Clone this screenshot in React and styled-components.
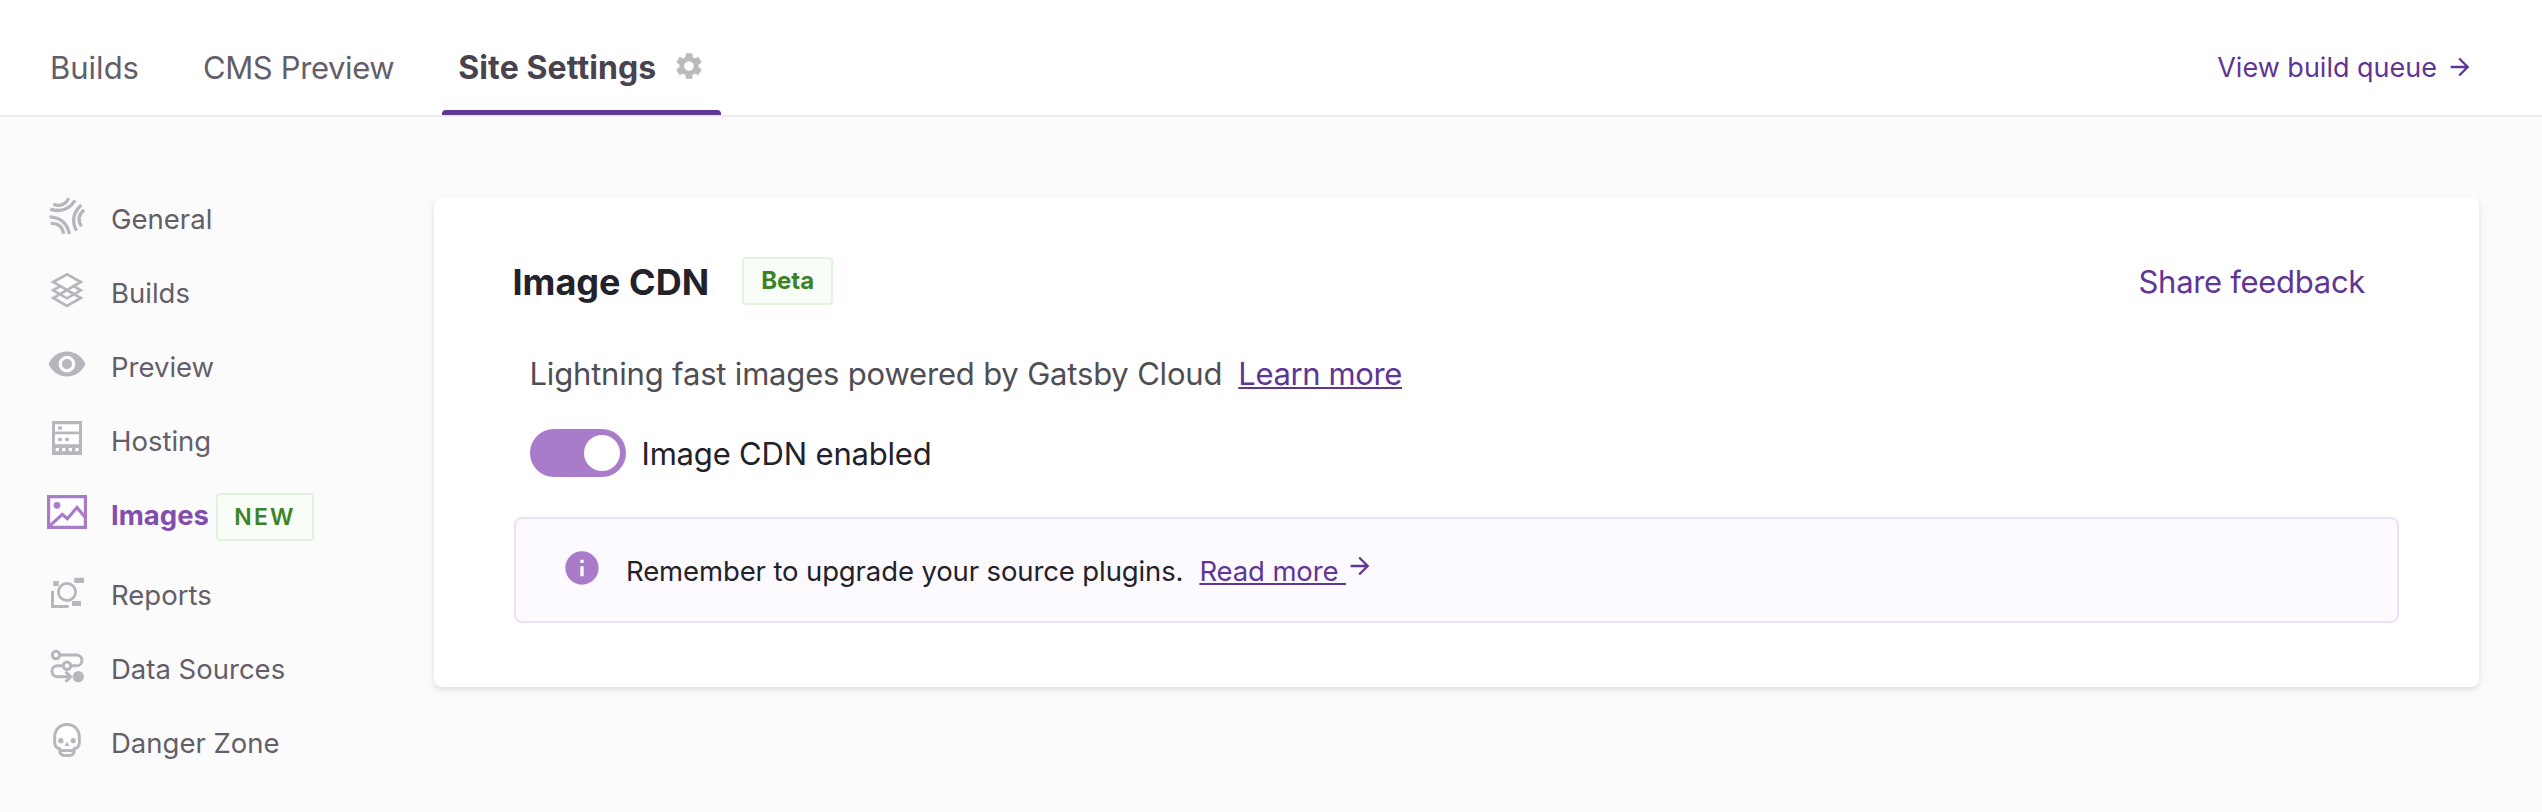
import React from "react";
import styled, { createGlobalStyle, css } from "styled-components";
import { MdArrowForward, MdInfo, MdSettings, MdVisibility } from "react-icons/md";

const color = {
  purple: "#5f3595",
  purpleMid: "#834dab",
  purpleSoft: "#a87cc8",
  ink: "#232129",
  grey: "#635e69",
  icon: "#b7b5bd",
};

const GlobalStyle = createGlobalStyle`
  *, *::before, *::after { box-sizing: border-box; }
  body {
    margin: 0;
    background: #fbfbfb;
    color: ${color.ink};
    font-family: Inter, "Liberation Sans", sans-serif;
    -webkit-font-smoothing: antialiased;
  }
`;

const Page = styled.div`
  min-height: 100vh;
`;

const Header = styled.header`
  display: flex;
  justify-content: space-between;
  height: 117px;
  padding: 0 68px 0 34px;
  background: #fff;
  border-bottom: 2px solid #ebebeb;
`;

const Tabs = styled.nav`
  display: flex;
  gap: 32px;
`;

const Tab = styled.a`
  display: flex;
  align-items: center;
  position: relative;
  padding: 20px 16px 0;
  font-size: 31px;
  line-height: 40px;
  letter-spacing: ${(p) => p.$tracking || 0}px;
  color: ${color.grey};
  white-space: nowrap;

  ${(p) =>
    p.$active &&
    css`
      width: 279px;
      justify-content: space-between;
      font-size: 32px;
      font-weight: 700;
      color: #48434f;

      &::after {
        content: "";
        position: absolute;
        left: 0;
        right: 0;
        bottom: 0;
        height: 5px;
        border-radius: 4px 4px 0 0;
        background: ${color.purple};
      }
    `}
`;

const GearIcon = styled(MdSettings)`
  flex: none;
  width: 32px;
  height: 32px;
  margin-bottom: 4px;
  color: #bbbbbd;
`;

const QueueLink = styled.a`
  display: flex;
  align-items: center;
  gap: 9px;
  padding-top: 19px;
  font-size: 27px;
  color: ${color.purple};
`;

const Arrow = styled(MdArrowForward)`
  width: 28px;
  height: 28px;
  flex: none;
`;

const Body = styled.div`
  display: grid;
  grid-template-columns: 434px 1fr;
  align-items: start;
  padding-right: 63px;
`;

const Sidebar = styled.nav`
  padding: 65px 0 0 47px;
`;

const NavItem = styled.a`
  display: flex;
  align-items: flex-start;
  height: ${(p) => (p.$active ? 80 : 74)}px;
  font-size: 27.5px;
  line-height: 74px;
  font-weight: ${(p) => (p.$active ? 700 : 400)};
  color: ${(p) => (p.$active ? color.purpleMid : color.grey)};

  svg {
    flex: none;
    width: 40px;
    height: 40px;
    margin: 14px 24px 0 0;
    color: ${(p) => (p.$active ? color.purpleSoft : color.icon)};
  }
`;

const Badge = styled.span`
  display: inline-flex;
  align-items: center;
  justify-content: center;
  height: 48px;
  padding: 0 17px;
  border: 2px solid #e0f4de;
  border-radius: 4px;
  background: #f8fdf8;
  color: #3b8326;
  font-size: 24px;
  font-weight: 700;
  line-height: 44px;
`;

const NewBadge = styled(Badge)`
  width: 98px;
  margin: 15px 0 0 7px;
  padding: 0;
  font-size: 23px;
  font-weight: 600;
  letter-spacing: 2.2px;
`;

const Card = styled.main`
  height: 490px;
  margin-top: 80px;
  padding: 60px 80px 0;
  border-radius: 8px;
  background: #fff;
  box-shadow: 0 2px 4px rgba(46, 41, 51, 0.08), 0 4px 8px rgba(71, 63, 79, 0.08);
`;

const CardHeader = styled.div`
  display: flex;
  align-items: center;
  height: 48px;
`;

const Title = styled.h1`
  margin: 1px 33px 0 -1.5px;
  font-size: 36px;
  font-weight: 700;
  line-height: 48px;
`;

const FeedbackLink = styled.a`
  margin: 1px 34px 0 auto;
  font-size: 31px;
  letter-spacing: -0.3px;
  color: ${color.purple};
`;

const Description = styled.p`
  display: flex;
  gap: 16px;
  margin: 49px 0 0 15.5px;
  font-size: 31px;
  line-height: 40px;
  letter-spacing: -0.18px;
  color: #4f4e54;
`;

const TextLink = styled.a`
  color: ${color.purple};
  text-decoration: underline;
  text-decoration-thickness: 2px;
  text-underline-offset: 2px;
  text-decoration-skip-ink: none;
`;

const LearnLink = styled(TextLink)`
  letter-spacing: -0.38px;
`;

const SwitchRow = styled.label`
  display: flex;
  align-items: center;
  gap: 15.5px;
  margin: 35px 0 0 16px;
  height: 48px;
  font-size: 31px;
  letter-spacing: -0.18px;
`;

const Switch = styled.span`
  display: flex;
  justify-content: flex-end;
  width: 96px;
  padding: 6px;
  border-radius: 24px;
  background: ${color.purpleSoft};
`;

const Knob = styled.span`
  width: 36px;
  height: 36px;
  border-radius: 50%;
  background: #fff;
`;

const Notice = styled.div`
  display: flex;
  align-items: center;
  height: 106px;
  margin-top: 40px;
  padding: 2px 0 0 46px;
  border: 2px solid #eddff8;
  border-radius: 8px;
  background: #fcfaff;
  font-size: 27.5px;
  letter-spacing: -0.12px;
  line-height: 40px;
  white-space: pre;
`;

const InfoIcon = styled(MdInfo)`
  width: 40px;
  height: 40px;
  margin: 0 24px 6px 0;
  color: ${color.purpleSoft};
`;

const ReadLink = styled(TextLink)`
  margin-left: 16px;
`;

const NoticeArrow = styled(Arrow)`
  margin-bottom: 10px;
  color: ${color.purple};
`;

function GeneralIcon() {
  return (
    <svg viewBox="0 0 40 40" fill="none" stroke="currentColor" strokeWidth="3.3">
      {[0, 120, 240].map((angle) => (
        <g key={angle} transform={`rotate(${angle} 20 20)`}>
          <path d="M3.2 13.1Q19.2 18.3 28 4.4M6.3 8.2Q16.6 12.2 21.8 2.2" />
        </g>
      ))}
    </svg>
  );
}

function BuildsIcon() {
  return (
    <svg viewBox="0 0 40 40" fill="none" stroke="currentColor" strokeWidth="2.7">
      <path fill="#fff" d="M20 12.3l13.8 8-13.8 8-13.8-8z" />
      <path d="M20 20l13.8 8L20 36 6.2 28z" />
      <path fill="#fff" d="M20 4.2L33.8 12 20 20 6.2 12z" />
    </svg>
  );
}

function HostingIcon() {
  return (
    <svg viewBox="0 0 40 40" fill="currentColor">
      <path d="M5 3h30v34H5z" />
      <path fill="#fff" d="M8 6.3h24v7.2H8zM8 16.3h24v10H8z" />
      <path d="M11.3 8.3h3.6v3.4h-3.6zM11.3 19.7h3.6v3.4h-3.6zM18.2 19.7h3.6v3.4h-3.6z" />
      <path fill="#fff" d="M8.7 30h3.2v3.2H8.7zM15.2 30h3.2v3.2h-3.2zM21.8 30H25v3.2h-3.2zM28.3 30h3.2v3.2h-3.2z" />
    </svg>
  );
}

function ImagesIcon() {
  return (
    <svg viewBox="0 0 40 40" fill="none" stroke="currentColor" strokeWidth="3.2">
      <path fill="#fff" d="M1.6 4.600h36.800v30.800H1.600z" />
      <circle cx="10" cy="13.300" r="3.400" fill="currentColor" stroke="none" />
      <path d="M2.500 34.200l12.800-11.900 5 4.500L30 15.500l7.800 9.400" />
    </svg>
  );
}

function ReportsIcon() {
  return (
    <svg viewBox="0 0 40 40" fill="currentColor">
      <circle cx="20" cy="20" r="8.6" fill="none" stroke="currentColor" strokeWidth="2.8" />
      <path d="M6.3 9h5.4v5H6.3zM27.3 5.700H37V11h-9.700zM25 29h9v5h-9zM4 19h3v14h14.700v3H4z" />
    </svg>
  );
}

function SourcesIcon() {
  return (
    <svg viewBox="0 0 40 40" fill="none" stroke="currentColor" strokeWidth="3">
      <circle cx="9" cy="9" r="3.7" />
      <circle cx="20" cy="19.8" r="3.7" />
      <path d="M13 9h16.500a5.400 5.400 0 0 1 0 10.800H24M16 19.800h-5.600a5.400 5.400 0 0 0 0 10.900H23M18.600 25.700l5 5-5 5" />
      <circle cx="31.3" cy="30.7" r="5.6" fill="currentColor" stroke="none" />
    </svg>
  );
}

function DangerIcon() {
  return (
    <svg viewBox="0 0 40 40" fill="#fff" stroke="currentColor" strokeWidth="3">
      <path d="M20 4.400C12.600 4.400 7.700 10 7.700 17v5.500c0 3.500 1.800 5.500 5 6.200V30c0 3.500 2 5.500 5 5.500h4.600c3 0 5-2 5-5.500v-1.300c3.200-.7 5-2.700 5-6.200V17C32.300 10 27.400 4.400 20 4.400z" />
      <path d="M13 30.600h14" />
      <path fill="currentColor" stroke="none" d="M20 21.700l2.600 4.300h-5.200z" />
      <circle cx="13.8" cy="20.700" r="2.600" fill="currentColor" stroke="none" />
      <circle cx="26.2" cy="20.700" r="2.600" fill="currentColor" stroke="none" />
    </svg>
  );
}

const navItems = [
  { label: "General", Icon: GeneralIcon },
  { label: "Builds", Icon: BuildsIcon },
  { label: "Preview", Icon: MdVisibility },
  { label: "Hosting", Icon: HostingIcon },
  { label: "Images", Icon: ImagesIcon, active: true, badge: "NEW" },
  { label: "Reports", Icon: ReportsIcon },
  { label: "Data Sources", Icon: SourcesIcon },
  { label: "Danger Zone", Icon: DangerIcon },
];

export default function App() {
  return (
    <Page>
      <GlobalStyle />
      <Header>
        <Tabs>
          <Tab>Builds</Tab>
          <Tab $tracking={-0.38}>CMS Preview</Tab>
          <Tab $active $tracking={0.1}>
            Site Settings
            <GearIcon />
          </Tab>
        </Tabs>
        <QueueLink>
          View build queue
          <Arrow />
        </QueueLink>
      </Header>
      <Body>
        <Sidebar>
          {navItems.map(({ label, Icon, active, badge }) => (
            <NavItem key={label} $active={active}>
              <Icon />
              {label}
              {badge && <NewBadge>{badge}</NewBadge>}
            </NavItem>
          ))}
        </Sidebar>
        <Card>
          <CardHeader>
            <Title>Image CDN</Title>
            <Badge>Beta</Badge>
            <FeedbackLink>Share feedback</FeedbackLink>
          </CardHeader>
          <Description>
            Lightning fast images powered by Gatsby Cloud
            <LearnLink>Learn more</LearnLink>
          </Description>
          <SwitchRow>
            <Switch>
              <Knob />
            </Switch>
            Image CDN enabled
          </SwitchRow>
          <Notice>
            <InfoIcon />
            Remember to upgrade your source plugins.
            <ReadLink>{"Read more "}</ReadLink>
            <NoticeArrow />
          </Notice>
        </Card>
      </Body>
    </Page>
  );
}
